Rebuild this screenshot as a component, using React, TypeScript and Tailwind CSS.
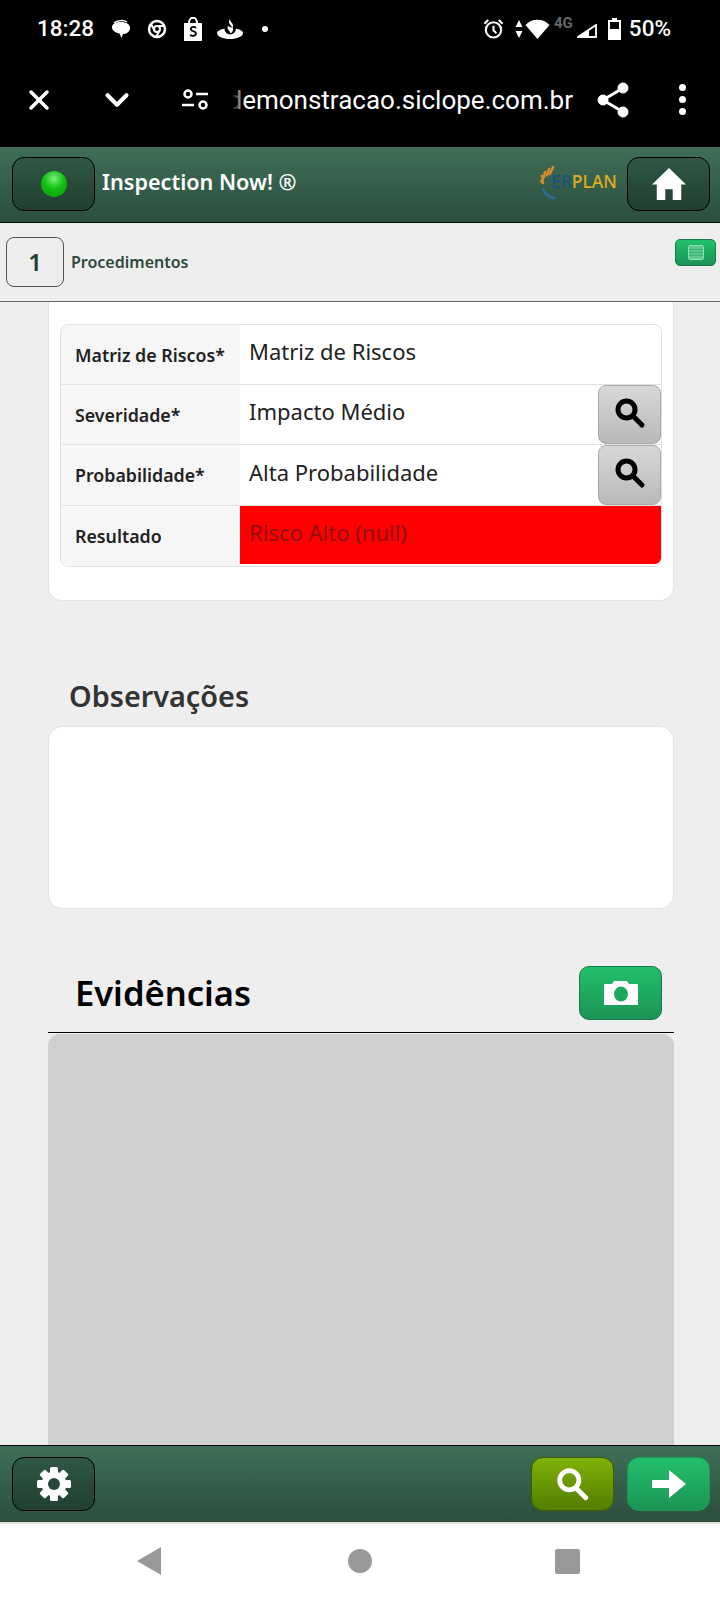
import { ChevronDown, X } from "lucide-react"

const sans = "font-['Noto_Sans',sans-serif]"

function SearchIcon({ className, color }: { className: string; color: string }) {
  return (
    <svg viewBox="0 0 32 32" className={className} fill="none" stroke={color}>
      <circle cx="12.5" cy="12.5" r="8.5" strokeWidth="5" />
      <path d="M19 19l9 9" strokeWidth="5" strokeLinecap="round" />
    </svg>
  )
}

function HomeIcon() {
  return (
    <svg viewBox="0 0 32 30" className="h-[32px] w-[34px]" fill="#fff">
      <path d="M16 0L32 15.500H27.500V30H19.500V20H12.500V30H4.500V15.500H0Z" />
    </svg>
  )
}

function GearIcon() {
  return (
    <svg viewBox="0 0 34 34" className="h-[34px] w-[34px]">
      <g fill="#fff">
        <circle cx="17" cy="17" r="12.500" />
        <rect x="13" y="0" width="8" height="34" rx="1.500" />
        <rect x="13" y="0" width="8" height="34" rx="1.500" transform="rotate(45 17 17)" />
        <rect x="13" y="0" width="8" height="34" rx="1.500" transform="rotate(90 17 17)" />
        <rect x="13" y="0" width="8" height="34" rx="1.500" transform="rotate(135 17 17)" />
      </g>
      <circle cx="17" cy="17" r="6" fill="#264a38" />
    </svg>
  )
}

function StatusBar() {
  return (
    <div className="flex h-[56px] items-center justify-between pt-[1px] pr-[49px] pl-[37px] font-['Roboto',sans-serif] text-[22.500px] font-medium text-white">
      <div className="flex items-center">
        <span>18:28</span>
        <svg viewBox="0 0 20 20" className="ml-[17px] h-[20px] w-[20px]" fill="#fff">
          <path d="M10 3c5 0 9 2 9 6 0 4-4 6-7 6l-1.500 4-2-4.500C5 14 1 12 1 8c0-3 4-5 9-5z" />
          <path d="M3 4c3-3 10-3 13-1" fill="none" stroke="#fff" strokeWidth="1.500" />
        </svg>
        <svg viewBox="0 0 20 20" className="ml-[16px] h-[20px] w-[20px]" fill="none" stroke="#fff">
          <circle cx="10" cy="10" r="8" strokeWidth="2.500" />
          <circle cx="10" cy="10" r="3" strokeWidth="2" />
          <path d="M10 7h8M7.500 11.500L4 5M12.500 11.500L9 18" strokeWidth="2" />
        </svg>
        <svg viewBox="0 0 20 24" className="ml-[16px] h-[24px] w-[20px]">
          <path d="M1 6h18v18H1z" fill="#fff" />
          <path d="M6 6c0-7 8-7 8 0" fill="none" stroke="#fff" strokeWidth="2" />
          <path d="M13 11c-2-2-6-1-5 1.500s5 1.500 5 4-4 3-6 1.500" fill="none" stroke="#000" strokeWidth="1.800" />
        </svg>
        <svg viewBox="0 0 26 20" className="ml-[14px] h-[20px] w-[26px]" fill="#fff">
          <path d="M13 0c0 3 3 4 3 6.500 0 1-.5 2-1 2.500 0-2.500-3-3.500-3-6 0-1 .5-2.500 1-3z" />
          <path d="M15.500 8c.5 1.500 1 2.500 0 4.500-.5 1-1.500 1.500-2 2 0-2-3-3.500-3-6 0-1 .5-1.500.5-2 .5 1.500 3.500 2.500 4.500 1.500z" />
          <path d="M7.500 9.500c-.5 2 2 6 5.500 6s6-3 6-6c4 1 7 2.500 7 4.500 0 3.500-6 6-13 6S0 17.500 0 14c0-2 3.500-3.500 7.500-4.500z" />
        </svg>
        <span className="ml-[19px] h-[6px] w-[6px] rounded-full bg-white" />
      </div>
      <div className="flex items-center">
        <svg viewBox="0 0 22 22" className="h-[21px] w-[21px]" fill="none" stroke="#fff" strokeWidth="2.200">
          <circle cx="11" cy="12.500" r="8" />
          <path d="M11 8v5l3 3M1.500 6l4-4M20.500 6l-4-4" />
        </svg>
        <svg viewBox="0 0 8 20" className="ml-[11px] h-[20px] w-[8px]" fill="#fff">
          <path d="M4 1l3.500 7h-7zM4 19l3.500-7h-7z" />
        </svg>
        <svg viewBox="0 0 24 20" className="ml-[2px] h-[20px] w-[25px]" fill="#fff">
          <path d="M12 20L0 6c6-7 18-7 24 0z" />
        </svg>
        <span className="mb-[11px] ml-[4px] text-[15px] leading-none font-bold text-[#666]">4G</span>
        <svg viewBox="0 0 20 14" className="mt-[5px] ml-[4px] h-[14px] w-[20px]">
          <path d="M19 1v12H1z" fill="none" stroke="#fff" strokeWidth="1.800" />
          <path d="M1 13L12 6v7z" fill="#fff" />
        </svg>
        <svg viewBox="0 0 13 22" className="ml-[11px] h-[22px] w-[13px]" fill="#fff">
          <path d="M4 0h5v2h4v20H0V2h4z" />
          <path d="M2 4h9v7H2z" fill="#000" />
        </svg>
        <span className="ml-[8px]">50%</span>
      </div>
    </div>
  )
}

function BrowserBar() {
  return (
    <div className="flex h-[91px] items-center pb-[4px] text-white">
      <X className="ml-[23px] h-[32px] w-[32px]" strokeWidth={2.6} />
      <ChevronDown className="ml-[43px] h-[38px] w-[38px]" strokeWidth={2.6} />
      <svg viewBox="0 0 26 22" className="ml-[46px] h-[22px] w-[26px]" fill="none" stroke="#fff" strokeWidth="2.500">
        <circle cx="6" cy="5" r="3.500" />
        <path d="M14 5h12M0 16h12" />
        <circle cx="21" cy="16" r="3.500" />
      </svg>
      <div className="relative ml-[24px] flex w-[341px] justify-end overflow-hidden font-['Roboto',sans-serif] text-[26px] leading-[34px] whitespace-nowrap">
        <span className="shrink-0">demonstracao.siclope.com.br</span>
        <span className="absolute top-0 left-0 h-full w-[14px] bg-gradient-to-r from-black to-transparent" />
      </div>
      <svg viewBox="0 0 32 36" className="ml-[24px] h-[36px] w-[32px]" fill="#fff" stroke="#fff">
        <circle cx="26" cy="6" r="5" />
        <circle cx="6" cy="18" r="5" />
        <circle cx="26" cy="30" r="5" />
        <path d="M26 6L6 18l20 12" fill="none" strokeWidth="3" />
      </svg>
      <div className="ml-[50px] flex flex-col gap-[5px]">
        <span className="h-[7px] w-[7px] rounded-full bg-white" />
        <span className="h-[7px] w-[7px] rounded-full bg-white" />
        <span className="h-[7px] w-[7px] rounded-full bg-white" />
      </div>
    </div>
  )
}

function Logo() {
  return (
    <div className="relative mr-[11px] h-[40px] w-[78px]">
      <svg viewBox="0 0 30 40" className="absolute top-0 left-0 h-[40px] w-[30px]" fill="none" strokeLinecap="round">
        <path d="M15 3l-3 7M11 5l-2 6M7 8l-1 5M4 12l1 4M3 17l2 2" stroke="#d98a2b" strokeWidth="2.500" />
        <path d="M5 25c2 5 6 8 11 9" stroke="#2f6d8f" strokeWidth="3" />
      </svg>
      <div className="absolute top-[6px] left-[13px] font-['Noto_Sans',sans-serif] text-[17.500px] leading-[22px] whitespace-nowrap">
        <span className="font-medium text-[#15557f]">ER</span>
        <span className="font-medium text-[#e0ad1c]">PLAN</span>
      </div>
    </div>
  )
}

function Row({
  label,
  value,
  search,
  danger,
  last,
  tall,
}: {
  label: string
  value: string
  search?: boolean
  danger?: boolean
  last?: boolean
  tall?: boolean
}) {
  return (
    <div className={`flex ${tall ? "h-[61px]" : "h-[60px]"} ${last ? "" : "border-b border-[#e2e2e2]"}`}>
      <div className="flex w-[179px] items-center bg-[#f6f6f6] pt-[1px] pl-[14px] text-[17.800px] font-semibold text-[#222]">
        {label}
      </div>
      {danger ? (
        <div className="mb-[2px] flex flex-1 items-center rounded-br-[6px] bg-[#ff0000] pb-[6px] pl-[9px] text-[22px] text-[#8f0f0f]">
          {value}
        </div>
      ) : (
        <div className="flex flex-1 items-center pb-[6px] pl-[9px] text-[22px] text-[#222]">{value}</div>
      )}
      {search && (
        <button className="flex w-[63px] items-center justify-center rounded-[8px] border border-[#a9a9a9] bg-gradient-to-b from-[#d8d8d8] to-[#b9b9b9]">
          <SearchIcon className="mb-[4px] h-[32px] w-[32px]" color="#000" />
        </button>
      )}
    </div>
  )
}

export default function App() {
  return (
    <div className={`flex h-[1600px] w-[720px] flex-col overflow-hidden bg-[#eeeeee] ${sans}`}>
      <div className="h-[147px] bg-black">
        <StatusBar />
        <BrowserBar />
      </div>

      <header className="flex h-[76px] items-center justify-between border-b-[1px] border-black bg-gradient-to-b from-[#3f6f58] to-[#2b4f3d] px-[10px] pb-[2px]">
        <div className="flex items-center">
          <button className="ml-[2px] flex h-[54px] w-[83px] items-center justify-center rounded-[12px] border border-black bg-gradient-to-b from-[#2f5744] to-[#21402f]">
            <span className="h-[26px] w-[26px] rounded-full bg-[radial-gradient(circle_at_50%_30%,#7df07d_0%,#10c010_45%,#0a9a0a_100%)]" />
          </button>
          <span className="mb-[3px] ml-[7px] text-[21.600px] font-semibold text-white">Inspection Now! ®</span>
        </div>
        <div className="flex items-center">
          <Logo />
          <button className="flex h-[54px] w-[83px] items-center justify-center rounded-[12px] border border-black bg-gradient-to-b from-[#2f5744] to-[#21402f]">
            <HomeIcon />
          </button>
        </div>
      </header>

      <div className="flex h-[79px] justify-between border-b border-[#666] pr-[4px] pl-[6px]">
        <div className="flex h-[50px] items-center self-center">
          <div className="flex h-[50px] w-[58px] items-center justify-center rounded-[8px] border border-[#555] text-[24px] font-semibold text-[#24402f]">
            1
          </div>
          <span className="ml-[7px] text-[16px] font-semibold text-[#2f4a3c]">Procedimentos</span>
        </div>
        <button className="mt-[16px] flex h-[27px] w-[41px] items-center justify-center rounded-[5px] border border-[#157a45] bg-gradient-to-b from-[#22c06c] to-[#1b9455]">
          <svg viewBox="0 0 16 15" className="h-[15px] w-[16px]" fill="none" stroke="#8fe0b4">
            <rect x="0.500" y="0.500" width="15" height="14" rx="1.500" fill="#5cc98f" />
            <path d="M1 4.500h14M1 7.500h14M1 10.500h14" stroke="#3fae76" />
          </svg>
        </button>
      </div>

      <main className="min-h-0 flex-1 overflow-hidden pr-[46px] pl-[48px]">
        <section className="h-[299px] rounded-b-[14px] border border-t-0 border-[#e4e4e4] bg-white px-[11px] pt-[22px]">
          <div className="overflow-hidden rounded-[8px] border border-[#e2e2e2] bg-white">
            <Row label="Matriz de Riscos*" value="Matriz de Riscos" />
            <Row label="Severidade*" value="Impacto Médio" search />
            <Row label="Probabilidade*" value="Alta Probabilidade" search tall />
            <Row label="Resultado" value="Risco Alto (null)" danger last />
          </div>
        </section>

        <h2 className="mt-[75px] pl-[21px] text-[28.800px] leading-[40px] font-semibold text-[#333]">Observações</h2>
        <div className="mt-[10px] h-[183px] rounded-[14px] border border-[#e4e4e4] bg-white" />

        <div className="mt-[57px] flex h-[67px] items-start justify-between border-b border-black pr-[12px] pl-[27px]">
          <h2 className="text-[34.500px] leading-[54px] font-semibold text-black">Evidências</h2>
          <button className="flex h-[54px] w-[83px] items-center justify-center rounded-[10px] border border-[#157a45] bg-gradient-to-b from-[#22c06c] to-[#1b9455]">
            <svg viewBox="0 0 34 24" className="h-[24px] w-[34px]">
              <path d="M0 3h8l2-3h13l2 3h9v21H0z" fill="#fff" />
              <ellipse cx="17" cy="13" rx="7" ry="7.500" fill="#1da860" />
            </svg>
          </button>
        </div>
        <div className="mt-[1px] h-[420px] rounded-t-[12px] bg-[#cfcfcf]" />
      </main>

      <footer className="flex h-[79px] items-center justify-between border-t border-b-[2px] border-t-black border-b-[#dfe3dc] bg-gradient-to-b from-[#3f6f58] to-[#2b4f3d] px-[10px]">
        <button className="ml-[2px] flex h-[54px] w-[83px] items-center justify-center rounded-[12px] border border-black bg-gradient-to-b from-[#2f5744] to-[#21402f]">
          <GearIcon />
        </button>
        <div className="flex gap-[13px]">
          <button className="flex h-[54px] w-[83px] items-center justify-center rounded-[12px] border border-[#3f5c00] bg-gradient-to-b from-[#80b209] to-[#527d00]">
            <svg viewBox="0 0 32 32" className="h-[34px] w-[34px]" fill="none" stroke="#fff">
              <circle cx="12.500" cy="12.500" r="9" strokeWidth="4.500" />
              <path d="M19 20l9 9" strokeWidth="4.500" strokeLinecap="round" />
            </svg>
          </button>
          <button className="flex h-[54px] w-[83px] items-center justify-center rounded-[12px] border border-[#1a9a5a] bg-gradient-to-b from-[#22c06c] to-[#1b9455]">
            <svg viewBox="0 0 34 28" className="h-[28px] w-[34px]" fill="#fff">
              <path d="M0 10h17V0l17 14-17 14V18H0z" />
            </svg>
          </button>
        </div>
      </footer>

      <nav className="relative flex h-[76px] items-center bg-white pb-[2px]">
        <svg viewBox="0 0 24 28" className="ml-[137px] h-[28px] w-[24px]" fill="#999">
          <path d="M24 0v28L0 14z" />
        </svg>
        <span className="ml-[187px] h-[24px] w-[24px] rounded-full bg-[#999]" />
        <span className="ml-[183px] h-[25px] w-[25px] rounded-[2px] bg-[#999]" />
      </nav>
    </div>
  )
}
